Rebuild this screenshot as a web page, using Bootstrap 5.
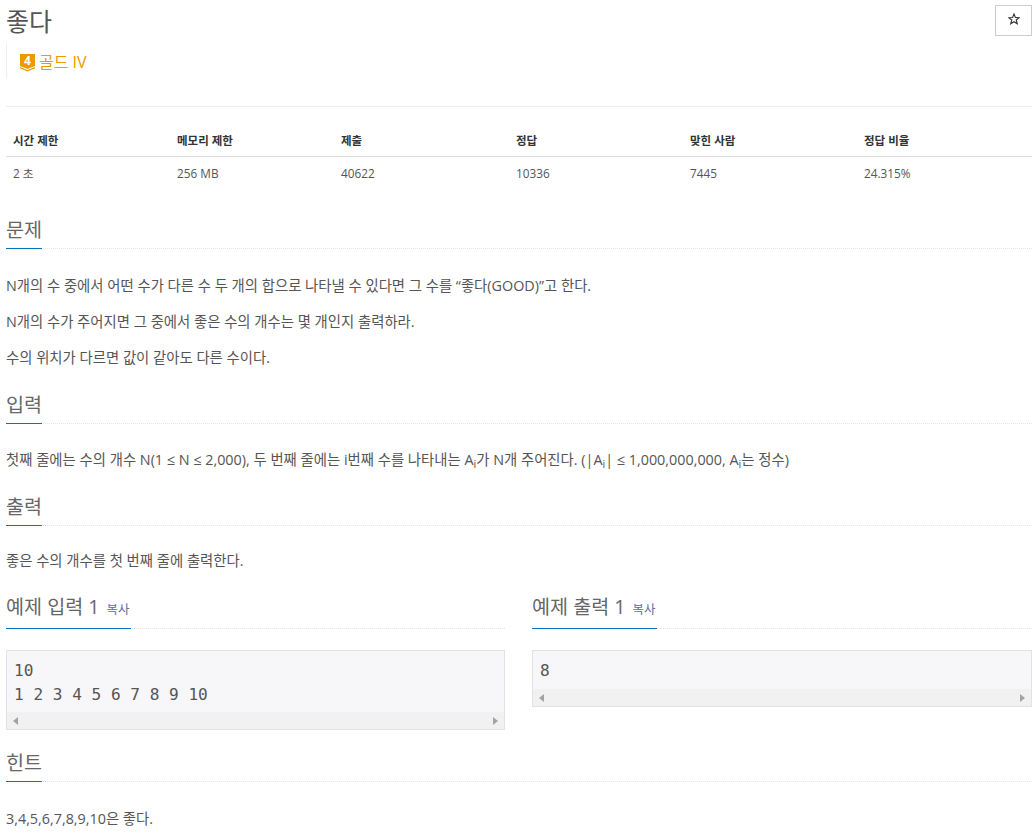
<!DOCTYPE html>
<html lang="ko">
  <head>
    <meta charset="UTF-8" />
    <meta name="viewport" content="width=device-width, initial-scale=1.0" />
    <title>좋다</title>
    <link href="https://cdn.jsdelivr.net/npm/bootstrap@5.3.0/dist/css/bootstrap.min.css" rel="stylesheet" />
    <style>
      body {
        font-family: "Open Sans", "Noto Sans CJK KR", sans-serif;
        font-size: 14.37px;
        color: #555;
        background: #fff;
        padding: 0 4px 0 6px;
        overflow: hidden;
      }
      .prob-title { font-size: 25px; font-weight: 400; color: #555; line-height: 36px; margin: 3px 0 0; }
      .star-btn { width: 37px; height: 31px; margin-top: 5px; border: 1px solid #ccc; background: #fff; color: #333; line-height: 1; padding: 0; }
      .star-btn svg { margin-bottom: 4px; }
      .tier-box { border-left: 1px solid #eee; height: 35px; margin-top: 5px; padding-left: 13px; color: #ec9a00; font-size: 16px; gap: 4px; }
      .tier-box svg { margin-top: -1px; }
      .top-rule { border-top: 1px solid #eee; margin-top: 27px; }
      .info-table { margin: 17px 0 0; table-layout: fixed; width: 100%; font-size: 11.8px; color: #555; }
      .info-table th { font-weight: 700; color: #333; font-size: 11.5px; padding: 7px 7px 6px; border-bottom: 1px solid #ddd; line-height: 19px; }
      .info-table td { padding: 7px 7px 7px; line-height: 18px; border: 0; }
      .sec-head { border-bottom: 1px dotted #e5e5e5; height: 38px; }
      .sec-name { display: inline-block; font-size: 19.6px; line-height: 38px; height: 38px; border-bottom: 1px solid #0076c0; color: #666; }
      .sec-body p { margin: 0 0 14px; line-height: 22px; }
      .copy-link { font-size: 12.4px; color: #5b6ea8; margin-left: 2px; }
      .sample-grid { display: grid; grid-template-columns: 499px 500px; column-gap: 27px; margin-top: 16px; }
      .sample-grid .sec-head, .sample-grid .sec-name { height: 41px; }
      .sample-grid .sec-name { padding-right: 2px; }
      .sample-box { border: 1px solid #e1e1e8; background: #f7f7f9; margin-top: 21px; }
      .sample-box pre { margin: 0; padding: 8px 7px 5px; font-family: "DejaVu Sans Mono", monospace; font-size: 16.1px; line-height: 24px; color: #555; overflow: hidden; }
      .sample-box pre.one-line { padding-bottom: 6px; }
      .fake-bar { height: 17px; background: #f1f1f1; padding: 0 6px; }
      .bar-left { width: 0; height: 0; border-style: solid; border-width: 4px 5px 4px 0; border-color: transparent #a3a3a3 transparent transparent; }
      .bar-right { width: 0; height: 0; border-style: solid; border-width: 4px 0 4px 5px; border-color: transparent transparent transparent #a3a3a3; }
    </style>
  </head>
  <body>
    <div class="d-flex justify-content-between align-items-start">
      <h1 class="prob-title">좋다</h1>
      <button class="star-btn d-flex align-items-center justify-content-center" type="button">
        <svg width="12" height="12" viewBox="0 0 12 12"><path d="M6 1L7.4 4.5L11.2 4.7L8.2 7L9.3 10.8L6 8.7L2.7 10.8L3.8 7L0.8 4.7L4.6 4.5Z" fill="none" stroke="#333" stroke-width="1.1" /></svg>
      </button>
    </div>
    <div class="tier-box d-flex align-items-center">
      <svg width="15" height="21" viewBox="0 -3 15 21">
        <path d="M0 0H15V12L7.5 15L0 12Z" fill="#ec9a00" />
        <path d="M0 13.5L7.5 16.8L15 13.5" fill="none" stroke="#ec9a00" stroke-width="1.3" />
        <text x="7.5" y="11" text-anchor="middle" font-size="12" font-weight="700" fill="#fff" font-family="Open Sans">4</text>
      </svg>
      <span>골드 IV</span>
    </div>
    <div class="top-rule"></div>

    <table class="info-table">
      <colgroup>
        <col style="width: 164px" /><col style="width: 164px" /><col style="width: 175px" /><col style="width: 174px" /><col style="width: 174px" /><col />
      </colgroup>
      <thead>
        <tr><th>시간 제한</th><th>메모리 제한</th><th>제출</th><th>정답</th><th>맞힌 사람</th><th>정답 비율</th></tr>
      </thead>
      <tbody>
        <tr><td>2 초</td><td>256 MB</td><td>40622</td><td>10336</td><td>7445</td><td>24.315%</td></tr>
      </tbody>
    </table>

    <div class="sec-head" style="margin-top: 22px"><span class="sec-name">문제</span></div>
    <div class="sec-body" style="margin-top: 26px">
      <p>N개의 수 중에서 어떤 수가 다른 수 두 개의 합으로 나타낼 수 있다면 그 수를 “좋다(GOOD)”고 한다.</p>
      <p>N개의 수가 주어지면 그 중에서 좋은 수의 개수는 몇 개인지 출력하라.</p>
      <p>수의 위치가 다르면 값이 같아도 다른 수이다.</p>
    </div>

    <div class="sec-head" style="margin-top: 17px"><span class="sec-name">입력</span></div>
    <div class="sec-body" style="margin-top: 25px">
      <p>첫째 줄에는 수의 개수 N(1 ≤ N ≤ 2,000), 두 번째 줄에는 i번째 수를 나타내는 A<sub>i</sub>가 N개 주어진다. (|A<sub>i</sub>| ≤ 1,000,000,000, A<sub>i</sub>는 정수)</p>
    </div>

    <div class="sec-head" style="margin-top: 17px"><span class="sec-name">출력</span></div>
    <div class="sec-body" style="margin-top: 24px">
      <p>좋은 수의 개수를 첫 번째 줄에 출력한다.</p>
    </div>

    <div class="sample-grid">
      <div>
        <div class="sec-head"><span class="sec-name">예제 입력 1 <span class="copy-link">복사</span></span></div>
        <div class="sample-box">
          <pre>10
1 2 3 4 5 6 7 8 9 10</pre>
          <div class="fake-bar d-flex justify-content-between align-items-center"><div class="bar-left"></div><div class="bar-right"></div></div>
        </div>
      </div>
      <div>
        <div class="sec-head"><span class="sec-name">예제 출력 1 <span class="copy-link">복사</span></span></div>
        <div class="sample-box">
          <pre class="one-line">8</pre>
          <div class="fake-bar d-flex justify-content-between align-items-center"><div class="bar-left"></div><div class="bar-right"></div></div>
        </div>
      </div>
    </div>

    <div class="sec-head" style="margin-top: 14px"><span class="sec-name">힌트</span></div>
    <div class="sec-body" style="margin-top: 26px">
      <p>3,4,5,6,7,8,9,10은 좋다.</p>
    </div>

    <script src="https://cdn.jsdelivr.net/npm/bootstrap@5.3.0/dist/js/bootstrap.bundle.min.js"></script>
  </body>
</html>
